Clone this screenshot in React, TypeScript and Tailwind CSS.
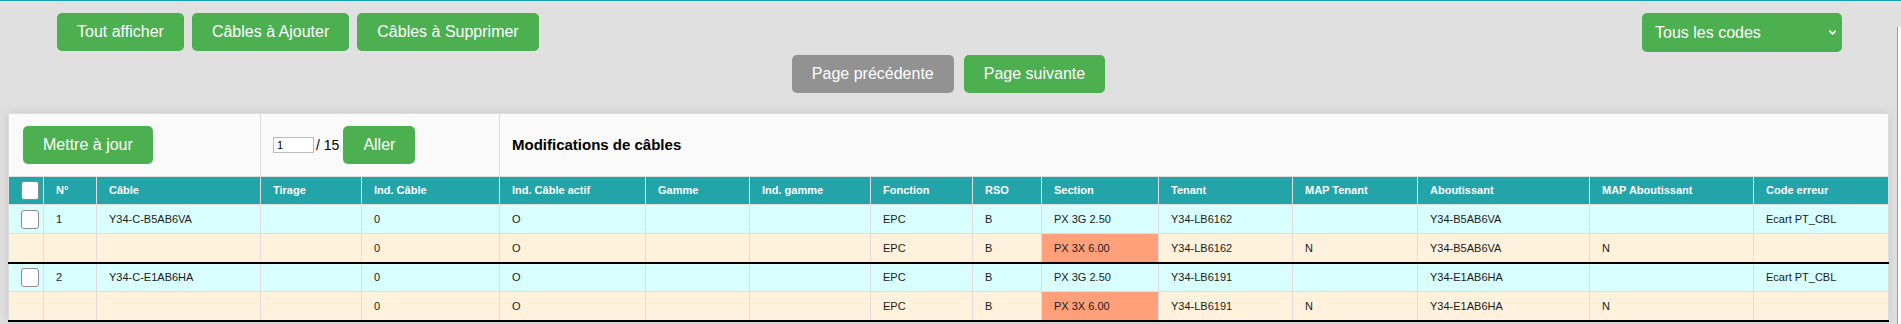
import { ChevronDown } from "lucide-react";

const cols = [
  "w-[35px]",
  "w-[53px]",
  "w-[164px]",
  "w-[101px]",
  "w-[138px]",
  "w-[146px]",
  "w-[104px]",
  "w-[121px]",
  "w-[102px]",
  "w-[69px]",
  "w-[117px]",
  "w-[134px]",
  "w-[125px]",
  "w-[172px]",
  "w-[164px]",
  "w-[135px]",
];

const headers = [
  "",
  "N°",
  "Câble",
  "Tirage",
  "Ind. Câble",
  "Ind. Câble actif",
  "Gamme",
  "Ind. gamme",
  "Fonction",
  "RSO",
  "Section",
  "Tenant",
  "MAP Tenant",
  "Aboutissant",
  "MAP Aboutissant",
  "Code erreur",
];

type Row = { cells: string[]; main: boolean };

const rows: Row[] = [
  {
    main: true,
    cells: ["", "1", "Y34-C-B5AB6VA", "", "0", "O", "", "", "EPC", "B", "PX 3G 2.50", "Y34-LB6162", "", "Y34-B5AB6VA", "", "Ecart PT_CBL"],
  },
  {
    main: false,
    cells: ["", "", "", "", "0", "O", "", "", "EPC", "B", "PX 3X 6.00", "Y34-LB6162", "N", "Y34-B5AB6VA", "N", ""],
  },
  {
    main: true,
    cells: ["", "2", "Y34-C-E1AB6HA", "", "0", "O", "", "", "EPC", "B", "PX 3G 2.50", "Y34-LB6191", "", "Y34-E1AB6HA", "", "Ecart PT_CBL"],
  },
  {
    main: false,
    cells: ["", "", "", "", "0", "O", "", "", "EPC", "B", "PX 3X 6.00", "Y34-LB6191", "N", "Y34-E1AB6HA", "N", ""],
  },
];

function Btn({ children, className = "" }: { children: React.ReactNode; className?: string }) {
  return (
    <button
      className={`bg-[#4caf50] text-white text-[16px] leading-[18px] px-5 py-[10px] rounded-[5px] whitespace-nowrap ${className}`}
    >
      {children}
    </button>
  );
}

function Check() {
  return (
    <input
      type="checkbox"
      className="appearance-none block mx-auto w-[18px] h-[19px] bg-white border border-[#8c8c8c] rounded-[3px]"
    />
  );
}

export default function App() {
  return (
    <div className="min-h-screen bg-[#e0e0e0] border-t border-[#149fb0] flex font-['Liberation_Sans',Arial,sans-serif]">
      <div className="flex-1 min-w-0">
        <div className="flex justify-between items-start pt-[12px] pl-[57px] pr-[55px]">
          <div className="flex gap-2">
            <Btn>Tout afficher</Btn>
            <Btn>Câbles à Ajouter</Btn>
            <Btn>Câbles à Supprimer</Btn>
          </div>
          <div className="relative">
            <select className="appearance-none bg-[#4caf50] text-white text-[16px] w-[200px] h-[39px] pl-[13px] rounded-[5px] outline-none">
              <option>Tous les codes</option>
            </select>
            <ChevronDown
              size={11}
              strokeWidth={3.5}
              className="absolute right-[4px] top-[14px] text-white pointer-events-none"
            />
          </div>
        </div>

        <div className="flex justify-center gap-[10px] mt-[3px]">
          <Btn className="bg-[#929292]!">Page précédente</Btn>
          <Btn>Page suivante</Btn>
        </div>

        <div className="mt-[20px] ml-[8px] w-[1880px] bg-[#fafafa] shadow-[0_0_10px_rgba(0,0,0,0.12)]">
          <table className="table-fixed border-collapse w-[1880px]">
            <colgroup>
              {cols.map((c, i) => (
                <col key={i} className={c} />
              ))}
            </colgroup>
            <tbody>
              <tr>
                <td colSpan={3} className="border border-[#dddddd] h-[63px] pl-[14px] align-middle">
                  <Btn>Mettre à jour</Btn>
                </td>
                <td colSpan={2} className="border border-[#dddddd] h-[63px] px-3 align-middle">
                  <div className="flex items-center">
                    <input
                      defaultValue="1"
                      className="w-[41px] h-[16px] bg-white border border-[#bcbcbc] text-[11px] px-[3px] text-black"
                    />
                    <span className="ml-[2px] text-[14px] text-black">/ 15</span>
                    <Btn className="ml-[4px]">Aller</Btn>
                  </div>
                </td>
                <td colSpan={11} className="border border-[#dddddd] h-[63px] px-3 align-middle">
                  <span className="text-[15px] font-bold text-black">Modifications de câbles</span>
                </td>
              </tr>
              <tr>
                {headers.map((h, i) => (
                  <th
                    key={i}
                    className="border border-[#dddddd] bg-[#22a4a9] text-white font-bold text-[11px] text-left px-3 h-[28px] align-middle"
                  >
                    {i === 0 ? <Check /> : h}
                  </th>
                ))}
              </tr>
              {rows.map((r, ri) => (
                <tr key={ri}>
                  {r.cells.map((c, ci) => {
                    const bg = r.main
                      ? "bg-[#d8fefe]"
                      : ci === 10
                        ? "bg-[#ffa07a]"
                        : "bg-[#fff1db]";
                    const bottom = r.main ? "" : "border-b-2 border-b-black";
                    return (
                      <td
                        key={ci}
                        className={`border border-[#dddddd] ${bg} ${bottom} px-3 h-[29px] text-[11px] text-[#1a1a1a] align-middle whitespace-nowrap`}
                      >
                        {ci === 0 && r.main ? <Check /> : c}
                      </td>
                    );
                  })}
                </tr>
              ))}
            </tbody>
          </table>
        </div>
      </div>
      <div className="w-[4px] mt-[26px] bg-white border-l border-[#9a9a9a]" />
    </div>
  );
}
